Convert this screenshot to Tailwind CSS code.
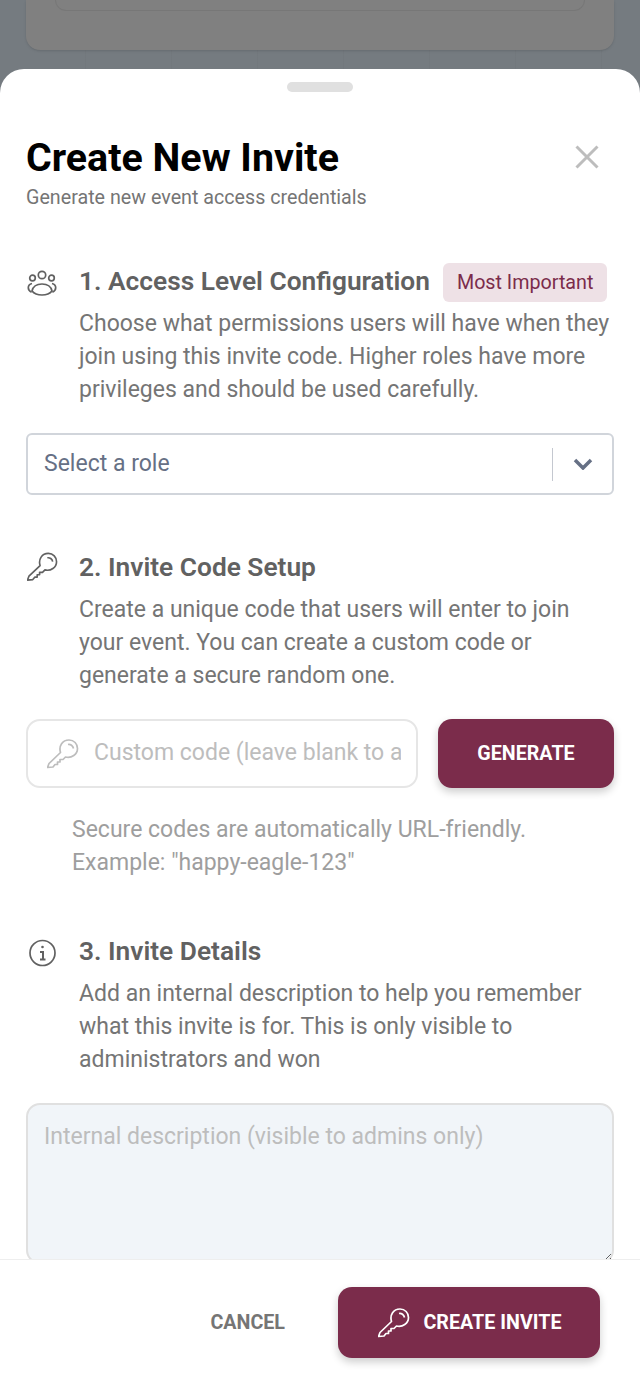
<!DOCTYPE html>
<html lang="en">
<head>
    <meta charset="UTF-8">
    <meta name="viewport" content="width=device-width, initial-scale=1.0">
    <title>Create New Invite</title>
    <script src="https://cdn.jsdelivr.net/npm/@tailwindcss/browser@4"></script>
</head>
<body class="h-[1385px] w-[640px] overflow-hidden bg-[#757b80] bg-[repeating-linear-gradient(90deg,transparent_0,transparent_85px,rgba(0,0,0,0.025)_85px,rgba(0,0,0,0.025)_86px)] font-['Roboto',sans-serif]">
    <!-- page behind the sheet -->
    <div class="h-[69px] overflow-hidden px-[26px]">
        <div class="h-[50px] rounded-b-[14px] bg-[#808080] px-[29px] shadow-sm">
            <div class="h-[11px] rounded-b-[14px] border border-t-0 border-[#777777]"></div>
        </div>
    </div>

    <div class="flex h-[1316px] flex-col overflow-hidden rounded-t-[24px] bg-white">
        <div class="flex-1 overflow-hidden px-[26px]">
            <div class="mx-auto mt-[13px] h-[10px] w-[66px] rounded-full bg-[#e0e0e0]"></div>

            <!-- header -->
            <div class="mt-[43px] flex items-start justify-between">
                <div>
                    <h1 class="text-[39.400px] leading-[46px] font-bold whitespace-nowrap text-black">Create New Invite</h1>
                    <p class="mt-[5px] mb-[-1px] text-[19.700px] leading-[24px] text-[#757575]">Generate new event access credentials</p>
                </div>
                <svg class="mt-[10px] mr-[15px] h-[24px] w-[24px]" viewBox="0 0 24 24" fill="none" stroke="#bdbdbd" stroke-width="3">
                    <path d="M1.500 1.500 22.500 22.500M22.500 1.500 1.500 22.500"/>
                </svg>
            </div>

            <!-- section 1 -->
            <div class="mt-[54px] flex items-start">
                <svg class="mt-[4px] h-[32px] w-[32px] shrink-0" viewBox="0 0 32 32" fill="none" stroke="#616161" stroke-width="1.700">
                    <circle cx="16" cy="8" r="3.700"/>
                    <circle cx="6.500" cy="11" r="2.800"/>
                    <circle cx="25.500" cy="11" r="2.800"/>
                    <path d="M6 24c1-4.500 5-7 10-7s9 2.500 10 7c-2 2.500-6 4-10 4s-8-1.500-10-4Z"/>
                    <path d="M6 16.500c-2.300.5-3.700 2.400-3.700 4.300 0 1.800 1.200 3.500 3.300 4.400M26 16.500c2.300.5 3.700 2.400 3.700 4.300 0 1.800-1.200 3.500-3.300 4.400"/>
                </svg>
                <div class="ml-[21px] flex-1">
                    <div class="flex h-[39px] items-center">
                        <h2 class="-mt-[4px] text-[26.300px] leading-[32px] font-semibold whitespace-nowrap text-[#616161]">1. Access Level Configuration</h2>
                        <span class="ml-[13px] flex h-[39px] items-center rounded-[6px] bg-[#eee1e6] px-[14px] text-[19.700px] whitespace-nowrap text-[#7b2c4b]">Most Important</span>
                    </div>
                    <p class="mt-[5px] w-[540px] text-[23px] leading-[33px] text-[#757575]">Choose what permissions users will have when they join using this invite code. Higher roles have more privileges and should be used carefully.</p>
                </div>
            </div>

            <div class="mt-[27px] flex h-[62px] items-center rounded-[6px] border-2 border-[#d1d5db] pl-[16px]">
                <span class="flex-1 text-[23px] text-[#667085]">Select a role</span>
                <span class="h-[33px] w-[1px] bg-[#c4c8d0]"></span>
                <svg class="mx-[19px] ml-[20px] h-[12px] w-[20px]" viewBox="0 0 20 12" fill="none" stroke="#667085" stroke-width="3.500">
                    <path d="M2 2l8 8 8-8"/>
                </svg>
            </div>

            <!-- section 2 -->
            <div class="mt-[53px] flex items-start">
                <svg class="mt-[3px] ml-[1px] h-[32px] w-[31px] shrink-0" viewBox="0 0 32 32" fill="none" stroke="#616161" stroke-width="1.700" stroke-linejoin="round">
                    <path d="M2 25.500 13.500 14.500C11.500 8 15.500 2 22 2c5 0 8.500 3.800 8.500 8.500 0 6-6 10-12 8.500l-2.500 2.500h-3v2.500l-2.500 0v2.500l-2.500 0-2 2.500-5.500.5Z"/>
                    <path d="M21 6.500c2.500-.5 5 1.200 5.500 4"/>
                </svg>
                <div class="ml-[21px] flex-1">
                    <h2 class="h-[39px] text-[26.300px] leading-[39px] font-semibold text-[#616161]">2. Invite Code Setup</h2>
                    <p class="mt-[6px] w-[520px] text-[23px] leading-[33px] text-[#757575]">Create a unique code that users will enter to join your event. You can create a custom code or generate a secure random one.</p>
                </div>
            </div>

            <div class="mt-[27px] flex gap-[20px]">
                <div class="flex h-[69px] w-[392px] items-center rounded-[14px] border-2 border-[#e6e6e6] pl-[19px]">
                    <svg class="h-[32px] w-[32px] shrink-0" viewBox="0 0 32 32" fill="none" stroke="#bdbdbd" stroke-width="1.700" stroke-linejoin="round">
                        <path d="M2 25.500 13.500 14.500C11.500 8 15.500 2 22 2c5 0 8.500 3.800 8.500 8.500 0 6-6 10-12 8.500l-2.500 2.500h-3v2.500l-2.500 0v2.500l-2.500 0-2 2.500-5.500.5Z"/>
                        <path d="M21 6.500c2.500-.5 5 1.200 5.500 4"/>
                    </svg>
                    <input class="ml-[15px] w-[307px] bg-transparent text-[23px] outline-none placeholder:text-[#bdbdbd]" placeholder="Custom code (leave blank to a">
                </div>
                <button class="h-[69px] flex-1 rounded-[14px] bg-[#7b2c4b] text-[19.700px] font-bold text-white shadow-[0_4px_8px_rgba(0,0,0,0.2)]">GENERATE</button>
            </div>
            <p class="mt-[25px] ml-[46px] text-[23px] leading-[33px] text-[#9e9e9e]">Secure codes are automatically URL-friendly.<br>Example: "happy-eagle-123"</p>

            <!-- section 3 -->
            <div class="mt-[53px] flex items-start">
                <svg class="mt-[5px] h-[32px] w-[32px] shrink-0" viewBox="0 0 32 32" fill="none" stroke="#616161" stroke-width="1.700">
                    <circle cx="16.500" cy="16" r="12.500"/>
                    <circle cx="16.500" cy="10" r="1.300" fill="#616161" stroke="none"/>
                    <path d="M14 15h3v7M14 22.500h5.500" stroke-width="2"/>
                </svg>
                <div class="ml-[21px] flex-1">
                    <h2 class="h-[39px] text-[26.300px] leading-[39px] font-semibold text-[#616161]">3. Invite Details</h2>
                    <p class="mt-[6px] w-[520px] text-[23px] leading-[33px] text-[#757575]">Add an internal description to help you remember what this invite is for. This is only visible to administrators and won</p>
                </div>
            </div>

            <textarea class="mt-[27px] block h-[161px] w-full rounded-[14px] border-2 border-[#e0e0e0] bg-[#f1f5f9] px-[16px] py-[15px] text-[23px] leading-[33px] outline-none placeholder:text-[#bdbdbd]" placeholder="Internal description (visible to admins only)"></textarea>
        </div>

        <!-- footer -->
        <div class="flex h-[126px] shrink-0 items-start justify-end border-t border-[#eeeeee] bg-white pt-[27px] pr-[40px]">
            <button class="mr-[53px] h-[71px] text-[19.700px] font-bold text-[#757575]">CANCEL</button>
            <button class="flex h-[71px] w-[262px] items-center justify-center gap-[13px] rounded-[14px] bg-[#7b2c4b] pl-[2px] text-[19.700px] font-bold text-white shadow-[0_4px_8px_rgba(0,0,0,0.2)]">
                <svg class="h-[32px] w-[32px]" viewBox="0 0 32 32" fill="none" stroke="#ffffff" stroke-width="1.700" stroke-linejoin="round">
                    <path d="M2 25.500 13.500 14.500C11.500 8 15.500 2 22 2c5 0 8.500 3.800 8.500 8.500 0 6-6 10-12 8.500l-2.500 2.500h-3v2.500l-2.500 0v2.500l-2.500 0-2 2.500-5.500.5Z"/>
                    <path d="M21 6.500c2.500-.5 5 1.200 5.500 4"/>
                </svg>
                CREATE INVITE
            </button>
        </div>
    </div>
</body>
</html>
